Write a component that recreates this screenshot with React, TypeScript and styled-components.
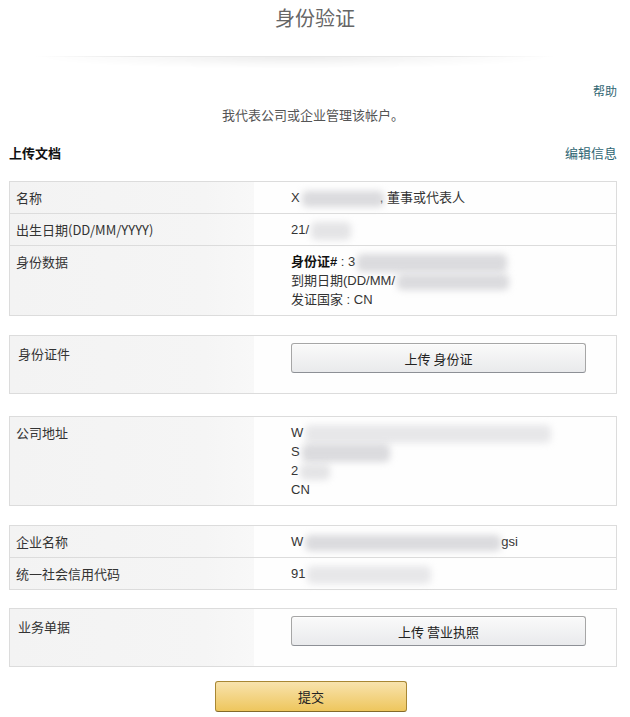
import styled, { createGlobalStyle } from "styled-components";

const GlobalStyle = createGlobalStyle`
  html, body {
    margin: 0;
    padding: 0;
    background: #ffffff;
  }
  body {
    font-family: "Liberation Sans", Arial, "Noto Sans CJK SC", sans-serif;
    font-size: 13px;
    color: #333;
  }
`;

const Page = styled.div`
  width: 630px;
  min-height: 717px;
  box-sizing: border-box;
  padding: 0 13px 0 9px;
`;

const Header = styled.h1`
  margin: 0 -13px 0 -9px;
  height: 36px;
  line-height: 36px;
  text-align: center;
  font-family: "Noto Sans CJK SC", sans-serif;
  font-size: 20px;
  font-weight: 400;
  color: #666;
`;

const Divider = styled.div`
  margin: 20px 0 0 26px;
  width: 520px;
  height: 12px;
  background: radial-gradient(ellipse at 50% 0%, rgba(0, 0, 0, 0.07) 0%, rgba(0, 0, 0, 0.02) 45%, rgba(0, 0, 0, 0) 70%);
  border-top: 1px solid;
  border-image: linear-gradient(to right, rgba(0, 0, 0, 0), rgba(0, 0, 0, 0.09) 20%, rgba(0, 0, 0, 0.09) 80%, rgba(0, 0, 0, 0)) 1;
`;

const HelpRow = styled.div`
  margin-top: 13px;
  text-align: right;
  line-height: 18px;
  font-size: 12px;
`;

const Link = styled.a<{ $size?: number }>`
  color: #2f6673;
  text-decoration: none;
  font-size: ${(p) => p.$size ?? 12}px;
  font-family: "Noto Sans CJK SC", sans-serif;
`;

const Intro = styled.p`
  margin: 5px 0 0;
  text-align: center;
  line-height: 18px;
  font-size: 13px;
  color: #555;
  font-family: "Noto Sans CJK SC", sans-serif;
`;

const SectionHead = styled.div`
  margin-top: 20px;
  display: flex;
  justify-content: space-between;
  align-items: center;
  line-height: 18px;
`;

const SectionTitle = styled.h3`
  margin: 0;
  font-size: 13px;
  font-weight: 700;
  color: #111;
  font-family: "Noto Sans CJK SC", sans-serif;
`;

const Box = styled.div<{ $gap: number }>`
  margin-top: ${(p) => p.$gap}px;
  border: 1px solid #dcdcdc;
  display: flex;
  flex-direction: column;
`;

const Row = styled.div`
  display: grid;
  grid-template-columns: 244px 1fr;
  & + & {
    border-top: 1px solid #dcdcdc;
  }
`;

const Label = styled.div<{ $upload?: boolean }>`
  background: linear-gradient(to right, #f3f3f3, #f5f5f5 80%, #f8f8f8);
  padding: ${(p) => (p.$upload ? "8px 8px" : "6px 6px")};
  line-height: 19px;
  font-family: "Noto Sans CJK SC", sans-serif;
  color: #333;
`;

const Value = styled.div<{ $upload?: boolean }>`
  padding: ${(p) => (p.$upload ? "7px 0 20px 37px" : "6px 0 6px 37px")};
  line-height: 19px;
  color: #333;
  display: flex;
  flex-direction: column;
  background: #fefefe;
`;

const Line = styled.div`
  height: 19px;
  white-space: nowrap;
  font-family: "Liberation Sans", Arial, "Noto Sans CJK SC", sans-serif;
`;

const Strong = styled.b`
  font-weight: 700;
  color: #111;
`;

const Smudge = styled.span<{ $w: number; $h?: number; $shade?: number }>`
  display: inline-block;
  vertical-align: middle;
  width: ${(p) => p.$w}px;
  height: ${(p) => p.$h ?? 14}px;
  margin: -6px -4px -6px 2px;
  background: rgba(190, 190, 195, ${(p) => p.$shade ?? 0.55});
  filter: blur(3.5px);
  border-radius: 5px;
`;

const Tail = styled.span`
  margin-left: 4px;
`;

const UploadButton = styled.button`
  width: 295px;
  height: 30px;
  border: 1px solid #a6a6a6;
  border-bottom-color: #8d9096;
  border-radius: 3px;
  background: linear-gradient(to bottom, #fafafa, #e9eaec);
  box-shadow: 0 1px 0 rgba(255, 255, 255, 0.6) inset;
  font-family: "Noto Sans CJK SC", sans-serif;
  font-size: 13px;
  color: #222;
  cursor: pointer;
`;

const Footer = styled.div`
  margin-top: 14px;
  display: flex;
  justify-content: center;
  padding-right: 4px;
`;

const SubmitButton = styled.button`
  width: 192px;
  height: 31px;
  border: 1px solid #a88734;
  border-bottom-color: #846a29;
  border-radius: 3px;
  background: linear-gradient(to bottom, #f8e3ad, #eec65d);
  font-family: "Noto Sans CJK SC", sans-serif;
  font-size: 13px;
  color: #222;
  cursor: pointer;
`;

export default function App() {
  return (
    <>
      <GlobalStyle />
      <Page>
        <Header>身份验证</Header>
        <Divider />
        <HelpRow>
          <Link href="#">帮助</Link>
        </HelpRow>
        <Intro>我代表公司或企业管理该帐户。</Intro>

        <SectionHead>
          <SectionTitle>上传文档</SectionTitle>
          <Link href="#" $size={13}>编辑信息</Link>
        </SectionHead>

        <Box $gap={19}>
          <Row>
            <Label>名称</Label>
            <Value>
              <Line>
                X<Smudge $w={82} $h={16} />, 董事或代表人
              </Line>
            </Value>
          </Row>
          <Row>
            <Label>出生日期(DD/MM/YYYY)</Label>
            <Value>
              <Line>
                21/<Smudge $w={40} $h={18} $shade={0.4} />
              </Line>
            </Value>
          </Row>
          <Row>
            <Label>身份数据</Label>
            <Value>
              <Line>
                <Strong>身份证#</Strong> : 3<Smudge $w={150} $h={18} />
              </Line>
              <Line>
                到期日期(DD/MM/<Smudge $w={112} $h={16} />
              </Line>
              <Line>发证国家 : CN</Line>
            </Value>
          </Row>
        </Box>

        <Box $gap={19}>
          <Row>
            <Label $upload>身份证件</Label>
            <Value $upload>
              <UploadButton>上传 身份证</UploadButton>
            </Value>
          </Row>
        </Box>

        <Box $gap={22}>
          <Row>
            <Label>公司地址</Label>
            <Value>
              <Line>
                W<Smudge $w={246} $h={18} $shade={0.35} />
              </Line>
              <Line>
                S<Smudge $w={88} $h={18} />
              </Line>
              <Line>
                2<Smudge $w={30} $h={16} $shade={0.4} />
              </Line>
              <Line>CN</Line>
            </Value>
          </Row>
        </Box>

        <Box $gap={19}>
          <Row>
            <Label>企业名称</Label>
            <Value>
              <Line>
                W<Smudge $w={196} $h={16} />
                <Tail>gsi</Tail>
              </Line>
            </Value>
          </Row>
          <Row>
            <Label>统一社会信用代码</Label>
            <Value>
              <Line>
                91<Smudge $w={124} $h={18} $shade={0.35} />
              </Line>
            </Value>
          </Row>
        </Box>

        <Box $gap={18}>
          <Row>
            <Label $upload>业务单据</Label>
            <Value $upload>
              <UploadButton>上传 营业执照</UploadButton>
            </Value>
          </Row>
        </Box>

        <Footer>
          <SubmitButton>提交</SubmitButton>
        </Footer>
      </Page>
    </>
  );
}
